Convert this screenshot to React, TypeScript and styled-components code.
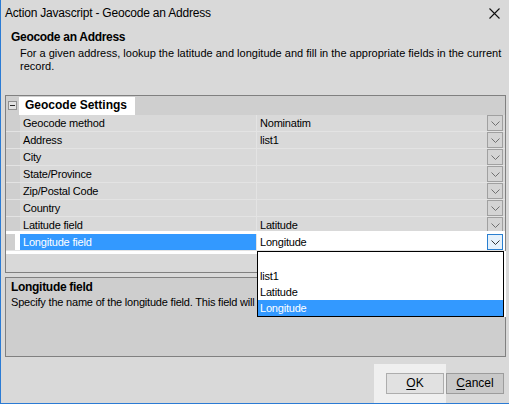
import React from 'react';
import styled, { createGlobalStyle } from 'styled-components';

const GlobalStyle = createGlobalStyle`
  html, body { margin: 0; padding: 0; background: #d9d9d9; }
  body { font-family: "Liberation Sans", Arial, sans-serif; color: #000; }
  * { box-sizing: border-box; }
`;

const Window = styled.div`
  position: relative;
  width: 509px;
  height: 404px;
  background: #d9d9d9;
  border-left: 1px solid #2b7bd4;
  border-bottom: 1px solid #2b7bd4;
  display: flex;
  flex-direction: column;
  overflow: hidden;
`;

const TitleBar = styled.div`
  height: 26px;
  display: flex;
  align-items: center;
  justify-content: space-between;
  padding-left: 4px;
`;

const TitleText = styled.span`
  font-size: 12px;
  letter-spacing: -0.2px;
  color: #000;
`;

const CloseButton = styled.div`
  width: 30px;
  height: 26px;
  display: flex;
  align-items: center;
  justify-content: center;
`;

const Header = styled.div`
  height: 69px;
  padding-left: 10px;
  padding-top: 4px;
`;

const Heading = styled.div`
  font-weight: bold;
  font-size: 12px;
  letter-spacing: -0.3px;
  line-height: 14px;
`;

const Description = styled.div`
  margin-top: 3px;
  margin-left: 9px;
  font-size: 11px;
  line-height: 13px;
  width: 485px;
`;

const GridBox = styled.div`
  margin-left: 4px;
  width: 501px;
  height: 178px;
  border: 1px solid #808080;
  background: #d9d9d9;
`;

const CategoryRow = styled.div`
  height: 19px;
  background: #cfcfcf;
  display: flex;
  align-items: flex-start;
`;

const Expander = styled.div`
  width: 9px;
  height: 9px;
  margin: 5px 2px 0 2px;
  border: 1px solid #8f8f8f;
  background: #e2e2e2;
  display: flex;
  align-items: center;
  justify-content: center;
  &::after {
    content: '';
    width: 5px;
    height: 1px;
    background: #2a2a2a;
  }
`;

const CategoryLabel = styled.div`
  margin-top: 1px;
  height: 18px;
  width: 116px;
  padding-left: 6px;
  background: #ffffff;
  font-weight: bold;
  font-size: 12px;
  line-height: 17px;
`;

const Row = styled.div<{ $selected?: boolean }>`
  height: 17px;
  display: flex;
  border-bottom: 1px solid #e3e3e3;
  position: relative;
  ${(p) =>
    p.$selected &&
    `
    box-shadow: 0 -3px 0 #fff, 0 3px 0 #fff;
    background: #fff;
  `}
`;

const Gutter = styled.div<{ $selected?: boolean }>`
  width: 14px;
  flex: none;
  background: ${(p) => (p.$selected ? 'linear-gradient(to right, #cfcfcf 9px, #fff 9px)' : '#cfcfcf')};
`;

const NameCell = styled.div<{ $selected?: boolean }>`
  width: 236px;
  flex: none;
  padding-left: 3px;
  font-size: 11px;
  letter-spacing: -0.2px;
  line-height: 16px;
  white-space: nowrap;
  overflow: hidden;
  background: ${(p) => (p.$selected ? '#3399ff' : '#d9d9d9')};
  color: ${(p) => (p.$selected ? '#fff' : '#000')};
`;

const ValueCell = styled.div<{ $selected?: boolean }>`
  flex: 1;
  border-left: 1px solid #e3e3e3;
  padding-left: 3px;
  font-size: 11px;
  letter-spacing: -0.2px;
  line-height: 16px;
  white-space: nowrap;
  overflow: hidden;
  background: ${(p) => (p.$selected ? '#fff' : '#d9d9d9')};
`;

const ButtonCell = styled.div<{ $selected?: boolean }>`
  width: 18px;
  flex: none;
  padding-right: 2px;
  background: ${(p) => (p.$selected ? '#fff' : '#d9d9d9')};
`;

const DropButton = styled.div<{ $focused?: boolean }>`
  width: 16px;
  height: 16px;
  border: 1px solid ${(p) => (p.$focused ? '#2a7fd0' : '#a0a0a0')};
  background: ${(p) => (p.$focused ? '#e5f1fb' : '#d4d4d4')};
  display: flex;
  align-items: center;
  justify-content: center;
`;

const HelpBox = styled.div`
  margin-top: 4px;
  margin-left: 4px;
  width: 501px;
  height: 80px;
  border: 1px solid #808080;
  background: #cecece;
  padding: 1px 0 0 5px;
  overflow: hidden;
`;

const HelpTitle = styled.div`
  font-weight: bold;
  font-size: 12px;
  letter-spacing: -0.3px;
  line-height: 16px;
`;

const HelpText = styled.div`
  font-size: 11px;
  letter-spacing: -0.2px;
  line-height: 14px;
  white-space: nowrap;
  overflow: hidden;
  width: 245px;
`;

const Footer = styled.div`
  height: 46px;
  display: flex;
  justify-content: flex-end;
  align-items: flex-end;
  padding-right: 5px;
`;

const OkSpot = styled.div`
  width: 72px;
  height: 39px;
  background: #efefef;
  padding: 9px 2px 0 12px;
`;

const DialogButton = styled.div<{ $variant?: 'ok' | 'cancel' }>`
  width: 58px;
  height: 21px;
  border: 1px solid ${(p) => (p.$variant === 'ok' ? '#adadad' : '#9c9c9c')};
  background: ${(p) => (p.$variant === 'ok' ? '#e1e1e1' : '#c9c9c9')};
  font-size: 12px;
  line-height: 19px;
  text-align: center;
  margin-bottom: ${(p) => (p.$variant === 'cancel' ? '9px' : '0')};
  & u { text-decoration: underline; text-underline-offset: 2px; }
`;

const DropList = styled.div`
  position: absolute;
  left: 256px;
  top: 251px;
  width: 247px;
  height: 66px;
  border: 1px solid #000;
  background: #fff;
  box-shadow: 2px 0 0 #fff;
`;

const ListItem = styled.div<{ $selected?: boolean }>`
  height: 16px;
  padding-left: 2px;
  font-size: 11px;
  letter-spacing: -0.2px;
  line-height: 16px;
  background: ${(p) => (p.$selected ? '#3399ff' : '#fff')};
  color: ${(p) => (p.$selected ? '#fff' : '#000')};
`;

const Chevron = ({ color = '#707070' }: { color?: string }) => (
  <svg width="9" height="5" viewBox="0 0 9 5">
    <path d="M0.5 0.5 L4.5 4.5 L8.5 0.5" fill="none" stroke={color} strokeWidth="1" />
  </svg>
);

const CloseIcon = () => (
  <svg width="11" height="11" viewBox="0 0 11 11">
    <path d="M0.5 0.5 L10.5 10.5 M10.5 0.5 L0.5 10.5" stroke="#111" strokeWidth="1.1" />
  </svg>
);

const rows = [
  { name: 'Geocode method', value: 'Nominatim' },
  { name: 'Address', value: 'list1' },
  { name: 'City', value: '' },
  { name: 'State/Province', value: '' },
  { name: 'Zip/Postal Code', value: '' },
  { name: 'Country', value: '' },
  { name: 'Latitude field', value: 'Latitude' },
  { name: 'Longitude field', value: 'Longitude', selected: true },
];

export default function App() {
  return (
    <>
      <GlobalStyle />
      <Window>
        <TitleBar>
          <TitleText>Action Javascript - Geocode an Address</TitleText>
          <CloseButton>
            <CloseIcon />
          </CloseButton>
        </TitleBar>
        <Header>
          <Heading>Geocode an Address</Heading>
          <Description>
            For a given address, lookup the latitude and longitude and fill in the appropriate fields in the current
            record.
          </Description>
        </Header>
        <GridBox>
          <CategoryRow>
            <Expander />
            <CategoryLabel>Geocode Settings</CategoryLabel>
          </CategoryRow>
          {rows.map((r) => (
            <Row key={r.name} $selected={r.selected}>
              <Gutter $selected={r.selected} />
              <NameCell $selected={r.selected}>{r.name}</NameCell>
              <ValueCell $selected={r.selected}>{r.value}</ValueCell>
              <ButtonCell $selected={r.selected}>
                <DropButton $focused={r.selected}>
                  <Chevron color={r.selected ? '#333' : '#707070'} />
                </DropButton>
              </ButtonCell>
            </Row>
          ))}
        </GridBox>
        <HelpBox>
          <HelpTitle>Longitude field</HelpTitle>
          <HelpText>Specify the name of the longitude field. This field will</HelpText>
        </HelpBox>
        <Footer>
          <OkSpot>
            <DialogButton $variant="ok">
              <u>O</u>K
            </DialogButton>
          </OkSpot>
          <DialogButton $variant="cancel">
            <u>C</u>ancel
          </DialogButton>
        </Footer>
        <DropList>
          <ListItem />
          <ListItem>list1</ListItem>
          <ListItem>Latitude</ListItem>
          <ListItem $selected>Longitude</ListItem>
        </DropList>
      </Window>
    </>
  );
}
